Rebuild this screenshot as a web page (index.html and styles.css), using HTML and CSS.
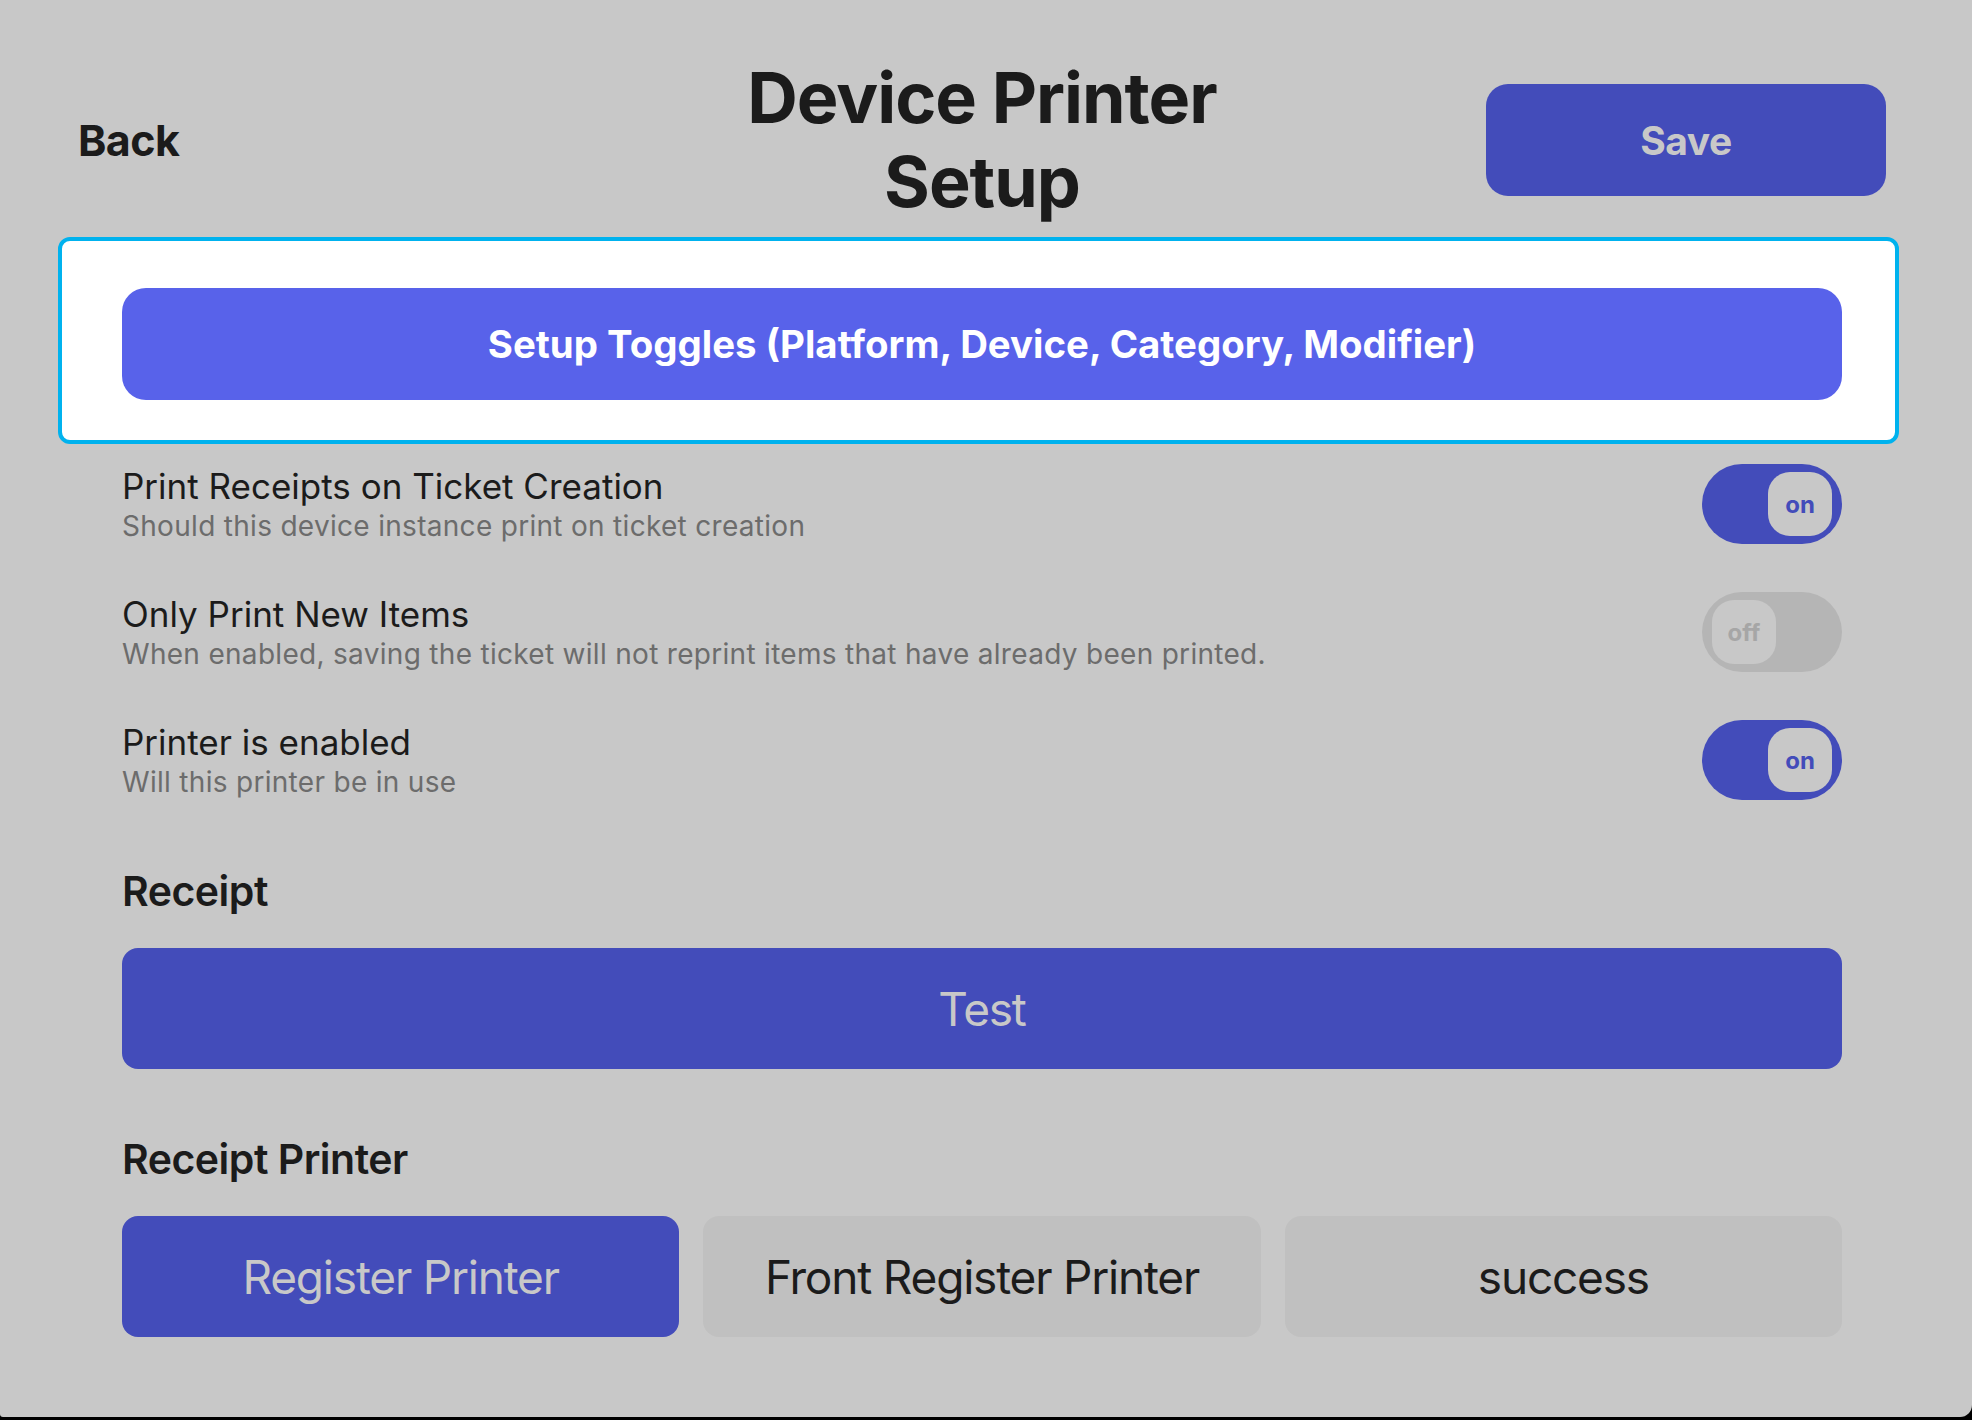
FILE: index.html
```html
<!DOCTYPE html>
<html lang="en">
<head>
<meta charset="utf-8">
<title>Device Printer Setup</title>
<link rel="stylesheet" href="styles.css">
</head>
<body>
<div class="screen">
  <header class="header">
    <button class="back-btn">Back</button>
    <h1 class="title">Device Printer Setup</h1>
    <div class="header-right">
      <button class="save-btn">Save</button>
    </div>
  </header>

  <section class="focus-card">
    <button class="toggles-btn">Setup Toggles (Platform, Device, Category, Modifier)</button>
  </section>

  <main class="content">
    <div class="settings">
      <div class="setting-row">
        <div class="setting-text">
          <div class="setting-title">Print Receipts on Ticket Creation</div>
          <div class="setting-sub">Should this device instance print on ticket creation</div>
        </div>
        <div class="switch switch-on"><span class="knob">on</span></div>
      </div>
      <div class="setting-row">
        <div class="setting-text">
          <div class="setting-title">Only Print New Items</div>
          <div class="setting-sub">When enabled, saving the ticket will not reprint items that have already been printed.</div>
        </div>
        <div class="switch switch-off"><span class="knob">off</span></div>
      </div>
      <div class="setting-row">
        <div class="setting-text">
          <div class="setting-title">Printer is enabled</div>
          <div class="setting-sub">Will this printer be in use</div>
        </div>
        <div class="switch switch-on"><span class="knob">on</span></div>
      </div>
    </div>

    <h2 class="section-title section-receipt">Receipt</h2>
    <button class="wide-btn">Test</button>

    <h2 class="section-title section-printer">Receipt Printer</h2>
    <div class="printer-grid">
      <button class="choice choice-active">Register Printer</button>
      <button class="choice">Front Register Printer</button>
      <button class="choice">success</button>
    </div>
  </main>
</div>
</body>
</html>
```

FILE: styles.css
```css
* { box-sizing: border-box; }

html, body {
  margin: 0;
  padding: 0;
  background: #000;
}

body {
  font-family: Inter, "Noto Sans", "Liberation Sans", sans-serif;
  color: #1b1b1b;
}

button {
  font-family: inherit;
  border: none;
  margin: 0;
  padding: 0;
  cursor: pointer;
}

.screen {
  width: 1972px;
  height: 1417px;
  background: #c8c8c8;
  border-radius: 0 0 12px 3px;
  overflow: hidden;
}

/* Header */
.header {
  display: grid;
  grid-template-columns: 1fr auto 1fr;
  align-items: center;
  padding: 56px 86px 0 78px;
}

.back-btn {
  justify-self: start;
  background: none;
  font-size: 43px;
  font-weight: 700;
  color: #1b1b1b;
  letter-spacing: -0.6px;
}

.title {
  margin: 0;
  width: 520px;
  text-align: center;
  font-size: 70px;
  line-height: 84px;
  font-weight: 700;
  letter-spacing: -1px;
  color: #1b1b1b;
}

.header-right {
  display: flex;
  justify-content: flex-end;
}

.save-btn {
  width: 400px;
  height: 112px;
  border-radius: 22px;
  background: #434cba;
  color: #c8c8c8;
  font-size: 39px;
  font-weight: 700;
  letter-spacing: -0.5px;
}

/* Focus card */
.focus-card {
  margin: 13px 73px 0 58px;
  background: #fff;
  border: 4px solid #00b2ee;
  border-radius: 12px;
  padding: 47px 53px 40px 60px;
}

.toggles-btn {
  display: block;
  width: 100%;
  height: 112px;
  border-radius: 24px;
  background: #5862ea;
  color: #fff;
  font-size: 38.4px;
  font-weight: 700;
}

/* Content */
.content {
  padding: 0 130px 0 122px;
}

.settings {
  display: flex;
  flex-direction: column;
  gap: 48px;
  padding-top: 20px;
}

.setting-row {
  display: flex;
  align-items: center;
  justify-content: space-between;
  height: 80px;
}

.setting-title {
  font-size: 35px;
  line-height: 40px;
  color: #1b1b1b;
}

.setting-sub {
  margin-top: 3px;
  font-size: 28px;
  line-height: 34px;
  color: #6c6c6c;
  letter-spacing: 0.3px;
}

.switch {
  width: 140px;
  height: 80px;
  border-radius: 40px;
  display: flex;
  align-items: center;
  padding: 0 10px;
}

.switch-on {
  background: #434cba;
  justify-content: flex-end;
}

.switch-off {
  background: #b5b5b5;
  justify-content: flex-start;
}

.knob {
  width: 64px;
  height: 64px;
  border-radius: 22px;
  background: #c8c8c8;
  display: flex;
  align-items: center;
  justify-content: center;
  font-size: 24px;
  font-weight: 700;
}

.switch-on .knob { color: #434cba; }
.switch-off .knob { color: #a6a6a6; }

.section-title {
  margin: 0;
  font-size: 41px;
  line-height: 48px;
  font-weight: 600;
  color: #1b1b1b;
  letter-spacing: -0.5px;
}

.section-receipt { margin-top: 67px; }
.section-printer { margin-top: 66px; }

.wide-btn {
  display: block;
  width: 100%;
  height: 121px;
  margin-top: 33px;
  border-radius: 16px;
  background: #434cba;
  color: #c8c8c8;
  font-size: 46px;
  font-weight: 400;
  letter-spacing: -1.2px;
}

.printer-grid {
  display: grid;
  grid-template-columns: repeat(3, 1fr);
  gap: 24px;
  margin-top: 33px;
}

.choice {
  height: 121px;
  border-radius: 16px;
  background: #c0c0c0;
  color: #1b1b1b;
  font-size: 46px;
  font-weight: 400;
  letter-spacing: -1.2px;
}

.choice-active {
  background: #434cba;
  color: #c8c8c8;
}
```
